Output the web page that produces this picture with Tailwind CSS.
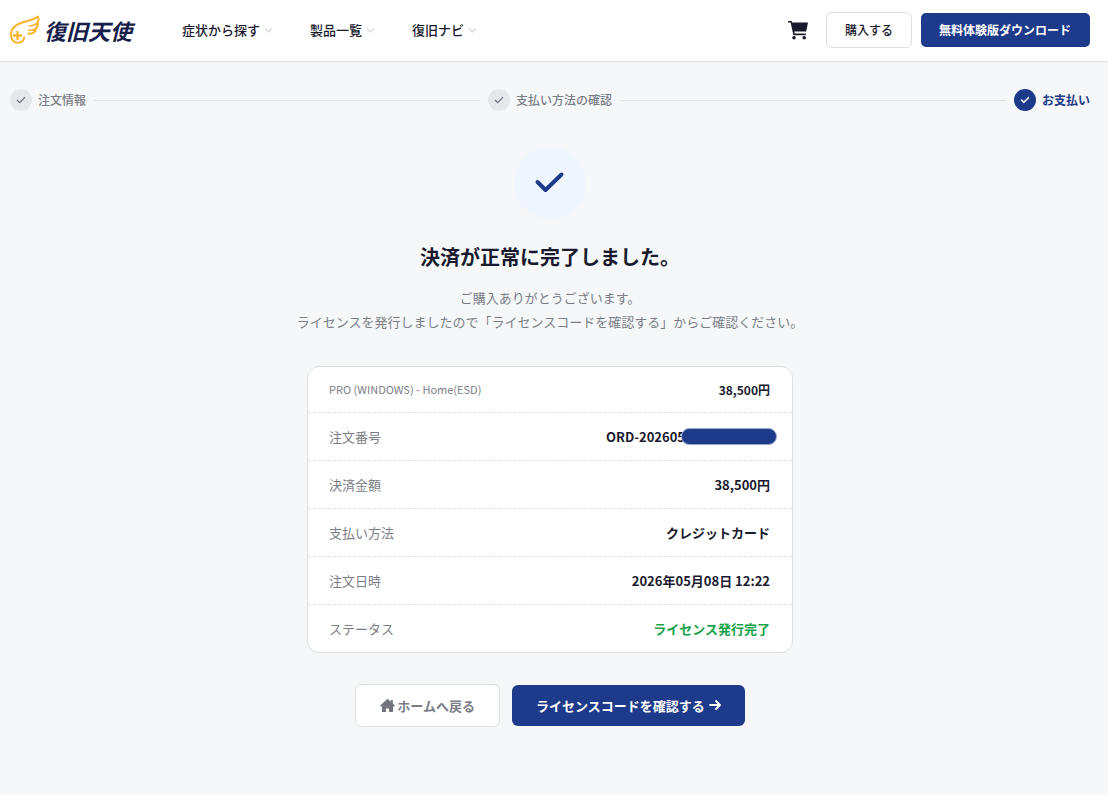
<!DOCTYPE html>
<html lang="ja">
<head>
  <meta charset="UTF-8" />
  <meta name="viewport" content="width=device-width, initial-scale=1.0" />
  <title>お支払い完了 | 復旧天使</title>
  <script src="https://cdn.jsdelivr.net/npm/@tailwindcss/browser@4"></script>
</head>
<body class="min-h-screen bg-[#f5f7f9] font-['Noto_Sans_CJK_JP',sans-serif] text-[13px] text-[#1a1a2e]">

  <!-- Header -->
  <header class="flex items-center justify-between border-b border-[#dedfe1] bg-white pt-3 pb-[13px] pl-[10px] pr-[18px]">
    <div class="flex items-center gap-[50px]">
      <a href="#" class="flex items-center gap-1">
        <svg class="h-[30px] w-[30px]" viewBox="0 0 30 30" fill="none" stroke="#fbb42a" stroke-linecap="round" stroke-linejoin="round">
          <path stroke-width="2" d="M1.200 17.500C2 12 7 9 13 7.200C19 5.400 24 5 27.800 1.500C29 4 28.600 7 26 9.200L28 8.800C27.600 12 26 14 23.600 14.800L25.800 14.600C24.800 17.600 22.800 19 18.500 18.600" />
          <path stroke-width="2" d="M1.200 17.500C.2 23.500 3.500 28 8 27.800C11.500 27.500 13.800 25.200 14.200 22.300" />
          <path stroke-width="1.600" d="M19.500 11C22 10.700 24.500 10.200 26 9.200M18.500 15C20.500 15.400 22.300 15.300 23.600 14.800" />
          <path stroke-width="2.400" stroke-linecap="butt" d="M7.500 16V25M3 20.500H12" />
        </svg>
        <span class="text-[22px] leading-8 font-bold text-[#14204a] italic">復旧天使</span>
      </a>
      <nav class="flex items-center gap-[37px] font-medium">
        <button class="flex items-center gap-1">症状から探す
          <svg class="h-[9px] w-[9px]" viewBox="0 0 9 9" fill="none" stroke="#d3d5d9" stroke-width="1.2"><path d="M1 2.500l3.500 3.500L8 2.500" /></svg>
        </button>
        <button class="flex items-center gap-1">製品一覧
          <svg class="h-[9px] w-[9px]" viewBox="0 0 9 9" fill="none" stroke="#d3d5d9" stroke-width="1.2"><path d="M1 2.500l3.500 3.500L8 2.500" /></svg>
        </button>
        <button class="flex items-center gap-1">復旧ナビ
          <svg class="h-[9px] w-[9px]" viewBox="0 0 9 9" fill="none" stroke="#d3d5d9" stroke-width="1.2"><path d="M1 2.500l3.500 3.500L8 2.500" /></svg>
        </button>
      </nav>
    </div>
    <div class="flex items-center text-xs">
      <a href="#" aria-label="カート" class="mr-[18px]">
        <svg class="h-5 w-5" viewBox="0 0 20 20" fill="#1a1a2e">
          <path d="M0 1H3.600L4.200 2.600H20L18.200 11.500H6.300L6.700 13.500H17.800V15.200H5.400L2.600 2.600H0Z" />
          <circle cx="6" cy="17.800" r="1.800" />
          <circle cx="16.200" cy="17.800" r="1.800" />
        </svg>
      </a>
      <button class="mr-[9px] h-9 rounded-md border border-[#dedfe1] bg-white px-[18px] font-medium">購入する</button>
      <button class="h-[34px] rounded-[5px] bg-[#1e3a8a] pr-[19px] pl-[18px] font-bold text-white">無料体験版ダウンロード</button>
    </div>
  </header>

  <main class="pt-[27px] pb-16 pl-[10px] pr-[18px]">
    <!-- Steps -->
    <ol class="flex items-center gap-2 text-xs font-medium text-[#7b7e87]">
      <li class="flex items-center gap-[6px]">
        <span class="flex h-[22px] w-[22px] items-center justify-center rounded-full bg-[#e5e7eb]">
          <svg class="h-[10px] w-[10px]" viewBox="0 0 10 10" fill="none" stroke="#6b7280" stroke-width="1.2"><path d="M1 5l2.800 2.700L9 2.200" /></svg>
        </span>
        注文情報
      </li>
      <li class="h-px flex-1 bg-[#e3e5e8]" aria-hidden="true"></li>
      <li class="flex items-center gap-[6px]">
        <span class="flex h-[22px] w-[22px] items-center justify-center rounded-full bg-[#e5e7eb]">
          <svg class="h-[10px] w-[10px]" viewBox="0 0 10 10" fill="none" stroke="#6b7280" stroke-width="1.2"><path d="M1 5l2.800 2.700L9 2.200" /></svg>
        </span>
        支払い方法の確認
      </li>
      <li class="h-px flex-1 bg-[#e3e5e8]" aria-hidden="true"></li>
      <li class="flex items-center gap-[6px] font-bold text-[#1e3a8a]">
        <span class="flex h-[22px] w-[22px] items-center justify-center rounded-full bg-[#1e3a8a]">
          <svg class="h-[10px] w-[10px]" viewBox="0 0 10 10" fill="none" stroke="#fff" stroke-width="1.6" stroke-linecap="round" stroke-linejoin="round"><path d="M1.500 5l2.400 2.300L8.500 2.700" /></svg>
        </span>
        お支払い
      </li>
    </ol>

    <!-- Result -->
    <section class="mt-9 flex flex-col items-center text-center">
      <div class="flex h-[72px] w-[72px] items-center justify-center rounded-full bg-[#eff6ff]">
        <svg class="h-8 w-8" viewBox="0 0 32 32" fill="none" stroke="#1e3a8a" stroke-width="4" stroke-linecap="round" stroke-linejoin="round"><path d="M3.500 15L11.500 23L27.500 7.500" /></svg>
      </div>
      <h1 class="mt-6 text-xl leading-7 font-bold">決済が正常に完了しました。</h1>
      <p class="mt-[15px] leading-6 text-[#7b7e87]">
        ご購入ありがとうございます。<br />
        ライセンスを発行しましたので「ライセンスコードを確認する」からご確認ください。
      </p>
    </section>

    <!-- Order summary -->
    <dl class="mx-auto mt-8 w-full max-w-[486px] divide-y divide-dashed divide-[#dedfe1] rounded-xl border border-[#dedfe1] bg-white leading-[23px]">
      <div class="flex items-center justify-between py-3 pr-[22px] pl-[21px]">
        <dt class="text-[11px] leading-[21px] text-[#7b7e87]">PRO (WINDOWS) - Home(ESD)</dt>
        <dd class="text-xs leading-[21px] font-bold">38,500円</dd>
      </div>
      <div class="flex items-center justify-between py-3 pr-[22px] pl-[21px]">
        <dt class="text-[#7b7e87]">注文番号</dt>
        <dd class="relative w-[164px] font-bold">
          ORD-202605
          <span class="absolute top-[3px] -right-[7px] h-[17px] w-24 rounded-full border border-[#9aa9d0] bg-[#1e3a8a]"></span>
        </dd>
      </div>
      <div class="flex items-center justify-between py-3 pr-[22px] pl-[21px]">
        <dt class="text-[#7b7e87]">決済金額</dt>
        <dd class="font-bold">38,500円</dd>
      </div>
      <div class="flex items-center justify-between py-3 pr-[22px] pl-[21px]">
        <dt class="text-[#7b7e87]">支払い方法</dt>
        <dd class="font-bold">クレジットカード</dd>
      </div>
      <div class="flex items-center justify-between py-3 pr-[22px] pl-[21px]">
        <dt class="text-[#7b7e87]">注文日時</dt>
        <dd class="font-bold">2026年05月08日 12:22</dd>
      </div>
      <div class="flex items-center justify-between py-3 pr-[22px] pl-[21px]">
        <dt class="text-[#7b7e87]">ステータス</dt>
        <dd class="font-bold text-[#16a34a]">ライセンス発行完了</dd>
      </div>
    </dl>

    <!-- Actions -->
    <div class="mt-[31px] flex flex-wrap items-center justify-center gap-3 font-bold">
      <button class="flex h-[43px] items-center gap-[2px] rounded-md border border-[#dedfe1] bg-white px-6 text-[#7b7e87]">
        <svg class="h-[15px] w-[15px]" viewBox="0 0 15 15" fill="#72757f"><path d="M7.500 .8L10.800 3.800V2H12.800V5.600L15 7.700L14.300 8.600H13V14H9V10.500H6V14H2V8.600H.7L0 7.700Z" /></svg>
        ホームへ戻る
      </button>
      <button class="flex h-[41px] items-center gap-1 rounded-md bg-[#1e3a8a] px-6 text-white">
        ライセンスコードを確認する
        <svg class="h-3 w-3" viewBox="0 0 12 12" fill="none" stroke="#fff" stroke-width="1.800" stroke-linecap="round" stroke-linejoin="round"><path d="M1 5H11M7 1L11 5L7 9" /></svg>
      </button>
    </div>
  </main>
</body>
</html>
